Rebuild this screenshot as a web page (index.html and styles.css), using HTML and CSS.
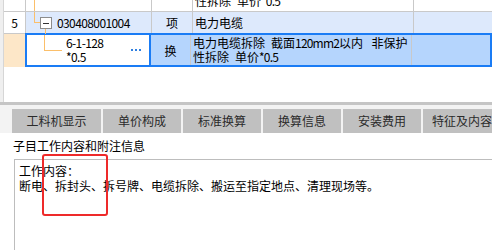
FILE: index.html
```html
<!DOCTYPE html>
<html lang="zh-CN">
<head>
    <meta charset="UTF-8">
    <title>子目工作内容</title>
    <link rel="stylesheet" href="styles.css">
</head>
<body>
    <div class="sheet">
        <div class="strip"></div>
        <div class="grid">
            <div class="row row-cut">
                <div class="cell num"></div>
                <div class="cell tree"><span class="stem"></span></div>
                <div class="cell unit"></div>
                <div class="cell name"><div class="lines">电力电缆拆除&ensp;截面<span class="latin">120mm2</span>以内&ensp;&thinsp;非保护<br>性拆除&ensp;单价<span class="latin">*0.5</span></div></div>
                <div class="cell rest"></div>
            </div>
            <div class="row row-parent">
                <div class="cell num">5</div>
                <div class="cell tree">
                    <span class="elbow"></span>
                    <span class="toggle"></span>
                    <span class="code">030408001004</span>
                </div>
                <div class="cell unit">项</div>
                <div class="cell name">电力电缆</div>
                <div class="cell rest"></div>
            </div>
            <div class="row row-sel">
                <div class="cell num"></div>
                <div class="selection">
                    <div class="cell tree">
                        <span class="elbow elbow-long"></span>
                        <span class="code code-sub">6-1-128<br>*0.5</span>
                        <svg class="more" width="11" height="2" viewBox="0 0 11 2"><rect x="0" y="0" width="2" height="2"/><rect x="4" y="0" width="2" height="2"/><rect x="8" y="0" width="2" height="2"/></svg>
                    </div>
                    <div class="cell unit">换</div>
                    <div class="cell name"><div class="lines">电力电缆拆除&ensp;截面<span class="latin">120mm2</span>以内&ensp;&thinsp;非保护<br>性拆除&ensp;单价<span class="latin">*0.5</span></div></div>
                    <div class="cell rest"></div>
                </div>
            </div>
        </div>
    </div>
    <div class="band"></div>
    <div class="tabs">
        <div class="tab tab-wide">工料机显示</div>
        <div class="tab">单价构成</div>
        <div class="tab">标准换算</div>
        <div class="tab">换算信息</div>
        <div class="tab">安装费用</div>
        <div class="tab">特征及内容</div>
    </div>
    <div class="label">子目工作内容和附注信息</div>
    <div class="notes">
        工作内容：<br>
        断电、拆封头、拆号牌、电缆拆除、搬运至指定地点、清理现场等。
    </div>
    <div class="mark"></div>
</body>
</html>
```

FILE: styles.css
```css
html, body {
    width: 492px;
    height: 250px;
    overflow: hidden;
}
body {
    margin: 0;
    position: relative;
    background-color: #fff;
    color: #000;
    font-family: "Noto Sans CJK SC", "Noto Sans", sans-serif;
    font-size: 12px;
}
.sheet {
    display: flex;
    height: 102px;
}
.strip {
    width: 3px;
    background-color: #efefef;
    border-right: 1px solid #d6d6d6;
}
.grid {
    flex: 1;
    display: flex;
    flex-direction: column;
}
.row {
    display: flex;
}
.cell {
    box-sizing: border-box;
    display: flex;
    align-items: center;
    border-right: 1px solid #c9c9c9;
    white-space: nowrap;
    overflow: hidden;
}
.num {
    width: 22px;
    justify-content: center;
}
.tree {
    width: 126px;
    padding-left: 8px;
}
.unit {
    width: 41px;
    justify-content: center;
}
.name {
    width: 221px;
    padding-left: 2px;
}
.rest {
    flex: 1;
    border-right: none;
}
.lines {
    line-height: 14px;
}
.latin {
    letter-spacing: -0.8px;
}

/* partly scrolled-off row */
.row-cut {
    height: 12px;
    border-bottom: 1px solid #c9c9c9;
    box-sizing: border-box;
}
.row-cut .cell {
    align-items: flex-end;
    padding-bottom: 3px;
}
.row-cut .tree {
    align-items: stretch;
    padding-bottom: 0;
}
.stem {
    border-left: 1px solid #fbbf6a;
}

/* parent row */
.row-parent {
    height: 21px;
    background-color: #dde9fc;
}
.row-parent .num {
    background-color: #fff;
    border-bottom: 1px solid #c9c9c9;
    height: 22px;
}
.row-parent .tree {
    align-items: flex-start;
    overflow: visible;
}
.elbow {
    width: 5px;
    height: 10px;
    border-left: 1px solid #fbbf6a;
    border-bottom: 1px solid #fbbf6a;
}
.toggle {
    position: relative;
    box-sizing: border-box;
    width: 12px;
    height: 12px;
    margin-top: 5px;
    border: 1px solid #8c8c8c;
    background-color: #fff;
}
.toggle::before {
    content: "";
    position: absolute;
    left: 2px;
    top: 5px;
    width: 6px;
    height: 1px;
    background-color: #333;
}
.toggle::after {
    content: "";
    position: absolute;
    left: 4px;
    top: 11px;
    height: 5px;
    border-left: 1px solid #fbbf6a;
}
.code {
    align-self: center;
    margin-left: 5px;
    letter-spacing: -0.6px;
}

/* selected row */
.row-sel {
    height: 34px;
}
.row-sel .num {
    width: 21px;
    border-right: none;
    border-top: 1px solid #c9c9c9;
    background-color: #fde7c8;
}
.selection {
    flex: 1;
    display: flex;
    box-sizing: border-box;
    border: 2px solid #1a7cf5;
    background-color: #b5d5fd;
}
.selection .tree {
    width: 124px;
    padding-left: 17px;
    align-items: flex-start;
    background-color: #fff;
    border-right: 2px solid #1a7cf5;
}
.selection .unit {
    width: 40px;
}
.selection .name {
    width: 221px;
}
.elbow-long {
    width: 17px;
    height: 15px;
}
.code-sub {
    flex: 1;
    margin-left: 4px;
    line-height: 14px;
}
.more {
    align-self: center;
    margin-right: 7px;
    fill: #2f7fe0;
}

/* bottom panel */
.band {
    height: 3px;
    background-color: #c5c5c5;
}
.tabs {
    display: flex;
    gap: 2px;
    padding: 4px 0 0 12px;
    background-color: #f3f3f3;
}
.tab {
    width: 78px;
    height: 24px;
    flex-shrink: 0;
    line-height: 24px;
    text-align: center;
    background-color: #c0c0c0;
    color: #2b2b2b;
}
.tab-wide {
    width: 89px;
}
.label {
    height: 26px;
    line-height: 26px;
    padding-left: 13px;
}
.notes {
    margin-left: 14px;
    height: 87px;
    padding: 3px 0 0 4px;
    line-height: 15px;
    border-top: 1px solid #bdbdbd;
    border-left: 1px solid #bdbdbd;
}
.mark {
    position: absolute;
    left: 42px;
    top: 154px;
    width: 62px;
    height: 58px;
    border: 2px solid #ee2a2a;
    border-radius: 3px;
}
```
